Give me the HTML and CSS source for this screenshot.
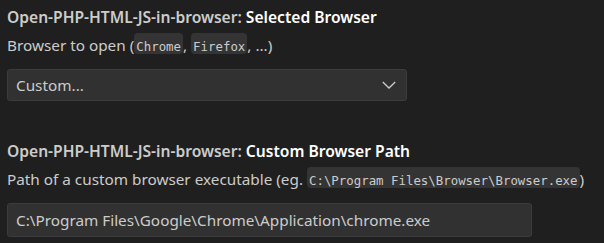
FILE: index.html
```html
<!DOCTYPE html>
<html lang="en">
<head>
    <meta charset="UTF-8">
    <meta name="viewport" content="width=device-width, initial-scale=1.0">
    <title>Settings</title>
    <link rel="stylesheet" href="styles.css">
</head>
<body>
    <div class="setting">
        <div class="setting-title">Open-PHP-HTML-JS-in-browser: <span class="setting-name">Selected Browser</span></div>
        <div class="setting-desc">Browser to open (<code>Chrome</code>, <code>Firefox</code>, ...)</div>
        <div class="select">
            <span>Custom...</span>
            <svg class="chevron" width="16" height="16" viewBox="0 0 16 16">
                <path d="M1.8 5 L8 11 L14.2 5" fill="none" stroke="#cccccc" stroke-width="1.3"/>
            </svg>
        </div>
    </div>

    <div class="setting">
        <div class="setting-title">Open-PHP-HTML-JS-in-browser: <span class="setting-name">Custom Browser Path</span></div>
        <div class="setting-desc">Path of a custom browser executable (eg. <code>C:\Program Files\Browser\Browser.exe</code>)</div>
        <input class="text-input" type="text" value="C:\Program Files\Google\Chrome\Application\chrome.exe">
    </div>
</body>
</html>
```

FILE: styles.css
```css
body {
    margin: 0;
    padding: 6px 7px 0;
    background-color: #1f1f1f;
    font-family: "Noto Sans", sans-serif;
    color: #cccccc;
}
.setting {
    margin-bottom: 39px;
}
.setting:last-child {
    margin-bottom: 0;
}
.setting-title {
    font-size: 15.6px;
    font-weight: 600;
    color: #cccccc;
    line-height: 22px;
}
.setting-name {
    color: #ffffff;
}
.setting-desc {
    font-size: 15.3px;
    color: #cccccc;
    line-height: 22px;
    margin-top: 6px;
}
code {
    font-family: "DejaVu Sans Mono", monospace;
    font-size: 12.4px;
    color: #cccccc;
    background: #343434;
    border-radius: 4px;
    padding: 6px 2px 0;
}
.select {
    display: flex;
    align-items: center;
    justify-content: space-between;
    box-sizing: border-box;
    width: 400px;
    height: 32px;
    margin-top: 11px;
    padding: 0 9px 0 8px;
    background: #313131;
    border: 1px solid #3c3c3c;
    border-radius: 3px;
    font-size: 15.3px;
    color: #cccccc;
}
.text-input {
    display: block;
    box-sizing: border-box;
    width: 525px;
    height: 34px;
    margin: 11px 0 0;
    padding: 0 8px;
    background: #313131;
    border: 1px solid #3c3c3c;
    border-radius: 3px;
    font-family: "Noto Sans", sans-serif;
    font-size: 15.3px;
    color: #cccccc;
    outline: none;
}
```
